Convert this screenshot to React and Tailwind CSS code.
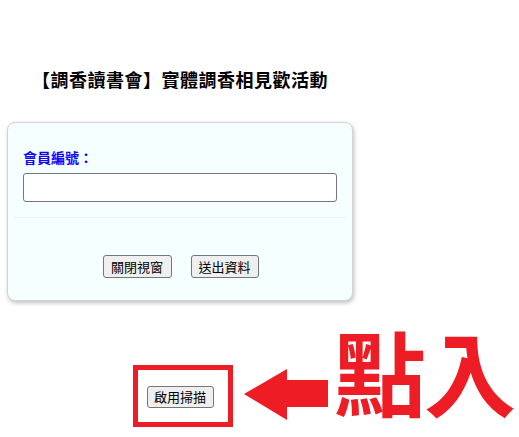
import React from "react";

export default function App() {
  const btn =
    "flex items-center justify-center bg-[#efefef] border border-[#767676] rounded-[3px] text-[13px] leading-none text-black";
  return (
    <div
      className="w-[519px] h-[437px] bg-white overflow-hidden"
      style={{ fontFamily: '"Noto Sans CJK TC", "Noto Sans", sans-serif' }}
    >
      <div className="pt-[67px] pl-[32px] text-[18px] leading-[24px] font-bold text-black tracking-[0.5px]">
        【調香讀書會】實體調香相見歡活動
      </div>

      <div className="ml-[7px] mt-[31px] w-[346px] h-[179px] bg-[#f5ffff] border border-[#d4d4d4] rounded-[8px] shadow-[1px_2px_4px_rgba(0,0,0,0.25)] pt-[24px]">
        <div className="pl-[15px] text-[14px] leading-[20px] font-bold text-[#1400ff]">
          會員編號：
        </div>
        <div className="pl-[15px] mt-[6px]">
          <div className="w-[314px] h-[29px] bg-white border border-[#767676] rounded-[3px]" />
        </div>
        <div className="mx-[7px] mt-[15px] border-t border-dotted border-[#e4eeee]" />
        <div className="mt-[37px] flex justify-center gap-[19px] pl-[1px]">
          <button className={`${btn} w-[69px] h-[23px]`}>關閉視窗</button>
          <button className={`${btn} w-[68px] h-[23px]`}>送出資料</button>
        </div>
      </div>

      <div className="mt-[29px] ml-[133px] flex items-start">
        <div className="mt-[35px] w-[100px] h-[62px] border-[5px] border-[#ee1c25] flex items-center justify-center">
          <button className={`${btn} w-[67px] h-[22px] mt-[1px] mr-[6px]`}>啟用掃描</button>
        </div>
        <svg
          className="mt-[39px] ml-[11px]"
          width="84"
          height="51"
          viewBox="0 0 84 51"
        >
          <polygon
            points="0,25 43,0 43,11 84,11 84,38 43,38 43,51"
            fill="#ee1c25"
          />
        </svg>
        <div className="ml-[6px] -mt-[6px] text-[92px] leading-none font-bold text-[#ee1c25] whitespace-nowrap tracking-[-2px]">
          點入
        </div>
      </div>
    </div>
  );
}
